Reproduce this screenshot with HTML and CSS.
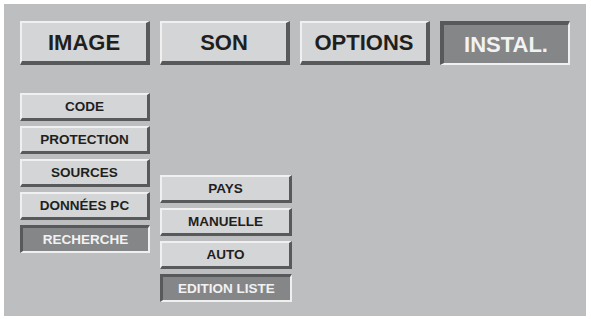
FILE: index.html
```html
<!DOCTYPE html>
<html>
<head>
<meta charset="utf-8">
<link rel="stylesheet" href="styles.css">
</head>
<body>
<div class="panel">
  <div class="tabs">
    <div class="tab">IMAGE</div>
    <div class="tab">SON</div>
    <div class="tab">OPTIONS</div>
    <div class="tab active">INSTAL.</div>
  </div>
  <div class="menus">
    <div class="col">
      <div class="btn">CODE</div>
      <div class="btn">PROTECTION</div>
      <div class="btn">SOURCES</div>
      <div class="btn">DONNÉES PC</div>
      <div class="btn active">RECHERCHE</div>
    </div>
    <div class="col col2">
      <div class="btn">PAYS</div>
      <div class="btn">MANUELLE</div>
      <div class="btn">AUTO</div>
      <div class="btn active">EDITION LISTE</div>
    </div>
  </div>
</div>
</body>
</html>
```
FILE: styles.css
```css
* { box-sizing: border-box; }
html, body { margin: 0; padding: 0; background: #ffffff; }
body { font-family: "Liberation Sans", Arial, sans-serif; font-weight: bold; }
.panel {
  margin: 4px;
  width: 582px;
  height: 312px;
  background: #bdbec0;
  padding: 17px 16px;
  display: flex;
  flex-direction: column;
}
.tabs { display: flex; gap: 10px; }
.tab {
  width: 131px;
  height: 44px;
  background: #d4d5d7;
  border-top: 2px solid #f0f0f1;
  border-left: 2px solid #f0f0f1;
  border-bottom: 4px solid #58595b;
  border-right: 4px solid #58595b;
  color: #1f1f20;
  font-size: 22px;
  display: flex;
  align-items: center;
  justify-content: center;
  padding-top: 1px;
}
.tab.active, .btn.active {
  background: #858688;
  color: #f2f2f2;
  border-top-color: #58595b;
  border-left-color: #58595b;
  border-bottom-color: #f0f0f1;
  border-right-color: #f0f0f1;
}
.tab.active { border-top-width: 4px; border-left-width: 4px; border-bottom-width: 2px; border-right-width: 2px; }
.menus { display: flex; gap: 10px; margin-top: 28px; align-items: flex-start; }
.col { display: flex; flex-direction: column; gap: 5px; width: 130px; }
.col2 { margin-top: 82px; width: 132px; }
.btn {
  height: 28px;
  background: #d4d5d7;
  border-top: 2px solid #f0f0f1;
  border-left: 2px solid #f0f0f1;
  border-bottom: 3px solid #58595b;
  border-right: 3px solid #58595b;
  color: #1f1f20;
  font-size: 13.5px;
  display: flex;
  align-items: center;
  justify-content: center;
}
.btn.active { border-top-width: 3px; border-left-width: 3px; border-bottom-width: 2px; border-right-width: 2px; }
```
